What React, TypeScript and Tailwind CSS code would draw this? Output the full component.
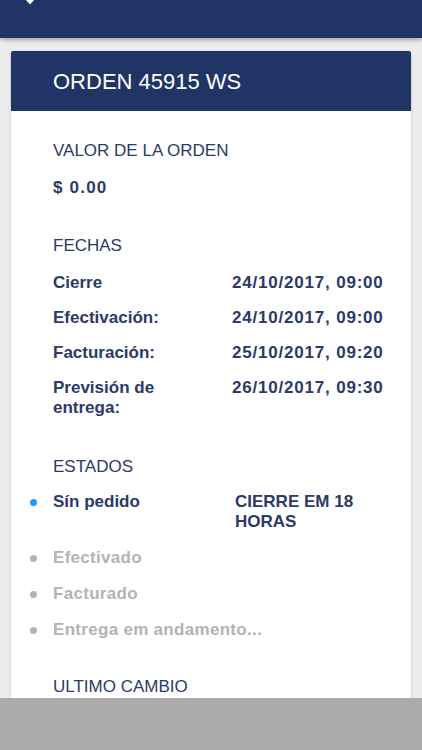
import React from 'react';

const fechas = [
  { label: 'Cierre', value: '24/10/2017, 09:00' },
  { label: 'Efectivación:', value: '24/10/2017, 09:00' },
  { label: 'Facturación:', value: '25/10/2017, 09:20' },
  { label: 'Previsión de entrega:', value: '26/10/2017, 09:30' },
];

const estados = [
  { label: 'Sín pedido', note: 'CIERRE EM 18 HORAS', active: true },
  { label: 'Efectivado', active: false },
  { label: 'Facturado', active: false },
  { label: 'Entrega em andamento...', active: false },
];

const SectionTitle = ({ children }: { children: React.ReactNode }) => (
  <div className="text-[17px] leading-[20px] text-[#2b3a66]">{children}</div>
);

export default function App() {
  return (
    <div
      className="h-[750px] w-[422px] overflow-hidden bg-[#ececec] flex flex-col"
      style={{ fontFamily: '"Liberation Sans", Arial, sans-serif' }}
    >
      <div className="h-[38px] shrink-0 bg-[#203466] shadow-[0_2px_4px_rgba(0,0,0,0.3)] relative z-10">
        <svg className="absolute left-[26px] top-0" width="8" height="5" viewBox="0 0 8 5">
          <path d="M0 0 H8 L4 4.5 Z" fill="#fff" />
        </svg>
      </div>

      <div className="flex-1 min-h-0 px-[11px] pt-[13px]">
        <div className="h-full bg-white shadow-[0_1px_3px_rgba(0,0,0,0.2)] rounded-t-[2px] overflow-hidden">
          <div className="h-[60px] bg-[#203466] flex items-center pl-[42px] pt-[1px]">
            <span className="text-[22px] text-white font-light">ORDEN 45915 WS</span>
          </div>

          <div className="pl-[42px] pr-[20px] pt-[30px] text-[#2b3a66]">
            <SectionTitle>VALOR DE LA ORDEN</SectionTitle>
            <div className="mt-[17px] text-[17px] leading-[20px] font-bold tracking-[1.2px]">$ 0.00</div>

            <div className="mt-[38px]">
              <SectionTitle>FECHAS</SectionTitle>
            </div>
            <div className="mt-[17px] flex flex-col gap-[15px]">
              {fechas.map((f) => (
                <div key={f.label} className="flex text-[17px] leading-[20px] font-bold">
                  <div className="w-[179px] pr-[20px] shrink-0">{f.label}</div>
                  <div className="tracking-[0.8px] whitespace-nowrap">{f.value}</div>
                </div>
              ))}
            </div>

            <div className="mt-[39px]">
              <SectionTitle>ESTADOS</SectionTitle>
            </div>
            <div className="mt-[15px] -ml-[23px] flex flex-col gap-[16px]">
              {estados.map((e) => (
                <div key={e.label} className="flex text-[17px] leading-[20px] font-bold">
                  <div className="w-[23px] h-[20px] shrink-0 flex items-center">
                    <span
                      className={
                        e.active
                          ? 'block w-[7px] h-[7px] rounded-full bg-[#2196f3]'
                          : 'block w-[7px] h-[7px] rounded-full bg-[#b3b3b3]'
                      }
                    />
                  </div>
                  <div
                    className={
                      e.active ? 'w-[182px] shrink-0 text-[#2b3a66]' : 'text-[#b3b3b3] tracking-[0.3px]'
                    }
                  >
                    {e.label}
                  </div>
                  {e.note && <div className="w-[150px] text-[#2b3a66]">{e.note}</div>}
                </div>
              ))}
            </div>

            <div className="mt-[37px]">
              <SectionTitle>ULTIMO CAMBIO</SectionTitle>
            </div>
          </div>
        </div>
      </div>

      <div className="h-[52px] shrink-0 bg-[#ababab]" />
    </div>
  );
}
